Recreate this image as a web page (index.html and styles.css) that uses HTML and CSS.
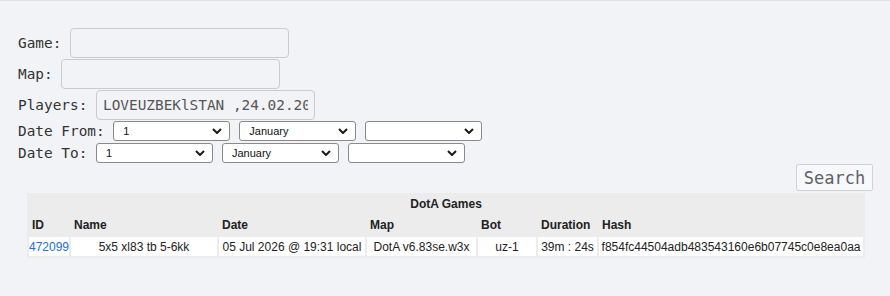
FILE: index.html
```html
<!DOCTYPE html>
<html lang="en">

<head>
    <meta charset="UTF-8">
    <title>DotA Games</title>
    <link rel="stylesheet" href="styles.css">
</head>

<body>

    <form class="search-form">
        <div class="field-row">
            <label class="field-label" for="game">Game: </label>
            <input class="text-input" id="game" type="text">
        </div>
        <div class="field-row">
            <label class="field-label" for="map">Map: </label>
            <input class="text-input" id="map" type="text">
        </div>
        <div class="field-row">
            <label class="field-label" for="players">Players: </label>
            <input class="text-input" id="players" type="text" value="LOVEUZBEKlSTAN ,24.02.2026">
        </div>
        <div class="date-row">
            <span class="field-label">Date From: </span>
            <span class="select-wrap">
                <select class="date-select"><option>1</option></select>
                <svg class="chevron" viewBox="0 0 10 6"><path d="M1 1 L5 5 L9 1"/></svg>
            </span>
            <span class="select-wrap">
                <select class="date-select"><option>January</option></select>
                <svg class="chevron" viewBox="0 0 10 6"><path d="M1 1 L5 5 L9 1"/></svg>
            </span>
            <span class="select-wrap">
                <select class="date-select"><option></option></select>
                <svg class="chevron" viewBox="0 0 10 6"><path d="M1 1 L5 5 L9 1"/></svg>
            </span>
        </div>
        <div class="date-row">
            <span class="field-label">Date To: </span>
            <span class="select-wrap">
                <select class="date-select"><option>1</option></select>
                <svg class="chevron" viewBox="0 0 10 6"><path d="M1 1 L5 5 L9 1"/></svg>
            </span>
            <span class="select-wrap">
                <select class="date-select"><option>January</option></select>
                <svg class="chevron" viewBox="0 0 10 6"><path d="M1 1 L5 5 L9 1"/></svg>
            </span>
            <span class="select-wrap">
                <select class="date-select"><option></option></select>
                <svg class="chevron" viewBox="0 0 10 6"><path d="M1 1 L5 5 L9 1"/></svg>
            </span>
        </div>
        <div class="button-row">
            <button class="search-button" type="button">Search</button>
        </div>
    </form>

    <table class="games-table">
        <colgroup>
            <col class="col-id">
            <col class="col-name">
            <col class="col-date">
            <col class="col-map">
            <col class="col-bot">
            <col class="col-duration">
            <col class="col-hash">
        </colgroup>
        <thead>
            <tr>
                <th class="table-title" colspan="7">DotA Games</th>
            </tr>
            <tr class="head-row">
                <th>ID</th>
                <th>Name</th>
                <th>Date</th>
                <th>Map</th>
                <th>Bot</th>
                <th>Duration</th>
                <th>Hash</th>
            </tr>
        </thead>
        <tbody>
            <tr>
                <td class="id-cell"><a href="#">472099</a></td>
                <td>5x5 xl83 tb 5-6kk</td>
                <td>05 Jul 2026 @ 19:31 local</td>
                <td>DotA v6.83se.w3x</td>
                <td>uz-1</td>
                <td>39m : 24s</td>
                <td>f854fc44504adb483543160e6b07745c0e8ea0aa</td>
            </tr>
        </tbody>
    </table>

</body>

</html>
```

FILE: styles.css
```css
body {
    margin: 0;
    border-top: 1px solid #dfe0e4;
    background-color: #f2f3f7;
    color: #333;
    font-family: 'DejaVu Sans Mono', monospace;
}

.search-form {
    padding-top: 27px;
}

.field-row {
    display: flex;
    align-items: center;
    height: 30px;
    margin-bottom: 1px;
    padding-left: 18px;
}

.field-label {
    font-size: 14.4px;
    line-height: 18px;
    white-space: pre;
    color: #333;
}

.text-input {
    box-sizing: border-box;
    width: 219px;
    height: 30px;
    padding: 0 6px;
    border: 1px solid #cbcbcb;
    border-radius: 4px;
    background: transparent;
    font-family: 'DejaVu Sans Mono', monospace;
    font-size: 14.4px;
    color: #555;
}

.date-row {
    display: flex;
    align-items: center;
    gap: 9px;
    height: 20px;
    margin-top: 2px;
    padding-left: 18px;
}

.field-row + .date-row {
    margin-top: 1px;
}

.date-row .field-label {
    margin-right: -9px;
}

.select-wrap {
    position: relative;
    display: flex;
    height: 20px;
}

.date-select {
    -webkit-appearance: none;
    appearance: none;
    box-sizing: border-box;
    width: 117px;
    height: 20px;
    padding: 0 0 0 9px;
    border: 1px solid #8a8a8a;
    border-radius: 3px;
    background: #fff;
    font-family: 'Liberation Sans', Arial, sans-serif;
    font-size: 11px;
    color: #111;
}

.chevron {
    position: absolute;
    right: 8px;
    top: 7px;
    width: 10px;
    height: 6px;
    fill: none;
    stroke: #1a1a1a;
    stroke-width: 2;
    pointer-events: none;
}

.button-row {
    display: flex;
    justify-content: flex-end;
    margin-top: 1px;
    padding-right: 17px;
}

.search-button {
    box-sizing: border-box;
    width: 77px;
    height: 27px;
    padding: 0;
    border: 1px solid #cfd1d5;
    border-radius: 2px;
    background-color: #f7f8fa;
    font-family: 'DejaVu Sans Mono', monospace;
    font-size: 17px;
    color: #5d6169;
}

.games-table {
    margin-top: 2px;
    margin-left: 27px;
    width: 838px;
    table-layout: fixed;
    border-spacing: 2px;
    background-color: #ececec;
    font-family: 'Liberation Sans', Arial, sans-serif;
    font-size: 12px;
    color: #222;
}

.col-id { width: 40px; }
.col-name { width: 146px; }
.col-date { width: 146px; }
.col-map { width: 109px; }
.col-bot { width: 58px; }
.col-duration { width: 59px; }
.col-hash { width: 264px; }

.games-table th,
.games-table td {
    padding: 0 3px;
    white-space: nowrap;
    overflow: hidden;
}

.games-table th {
    text-align: left;
    font-weight: 700;
}

.games-table .table-title {
    height: 17px;
    text-align: center;
}

.head-row th {
    height: 21px;
}

.games-table td {
    height: 19px;
    padding: 0 1px;
    text-align: center;
    background-color: #fff;
}

.games-table .id-cell {
    padding: 0;
}

.games-table a {
    color: #1a6fd6;
    text-decoration: none;
}
```
